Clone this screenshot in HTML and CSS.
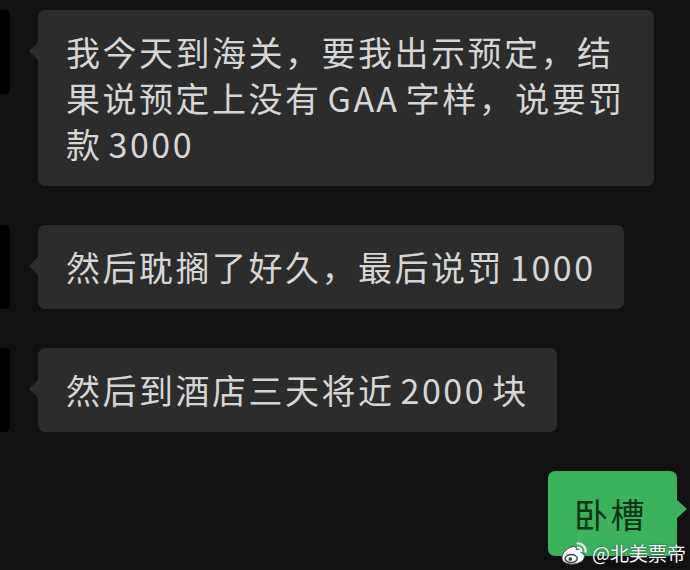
FILE: index.html
```html
<!DOCTYPE html>
<html lang="zh">

<head>
  <meta charset="UTF-8">
  <meta name="viewport" content="width=device-width, initial-scale=1.0">
  <title>聊天记录</title>
  <link rel="stylesheet" href="styles.css">
</head>

<body>
  <div class="chat">
    <div class="row">
      <div class="avatar"></div>
      <div class="bubble">我今天到海关，要我出示预定，结果说预定上没有 GAA 字样，说要罚款 3000</div>
    </div>
    <div class="row">
      <div class="avatar"></div>
      <div class="bubble">然后耽搁了好久，最后说罚 1000</div>
    </div>
    <div class="row">
      <div class="avatar"></div>
      <div class="bubble">然后到酒店三天将近 2000 块</div>
    </div>
    <div class="row row-me">
      <div class="bubble bubble-me">卧槽</div>
    </div>
  </div>

  <!-- 水印 -->
  <div class="watermark">
    <svg class="weibo" width="30" height="26" viewBox="0 0 32 28">
      <path d="M3 19c0-5 6-11 12-12 3-.5 4 1 3.5 3.5 2.5-1 5-.8 5 1.5 0 .8-.3 1.4-.3 1.4 2.8.8 4 2.2 4 4.3 0 4.5-6 8.3-13 8.3C8 26 3 23.5 3 19z" fill="#fff" stroke="#444" stroke-width="1"/>
      <ellipse cx="13" cy="20" rx="6.5" ry="4.3" fill="none" stroke="#444" stroke-width="1.6"/>
      <circle cx="12" cy="20.5" r="2" fill="#444"/>
      <path d="M20 3.5a8.5 8.5 0 0 1 8.5 9" fill="none" stroke="#fff" stroke-width="2.4" stroke-linecap="round"/>
      <path d="M20 8a4 4 0 0 1 4 4.2" fill="none" stroke="#fff" stroke-width="2.2" stroke-linecap="round"/>
    </svg>
    <span>@北美票帝</span>
  </div>
</body>

</html>
```

FILE: styles.css
```css
* {
  padding: 0;
  margin: 0;
  box-sizing: border-box;
}

body {
  background: #111111;
  font-family: "Noto Sans CJK SC", "Noto Sans", sans-serif;
  width: 690px;
  height: 570px;
  overflow: hidden;
  position: relative;
}

.chat {
  display: flex;
  flex-direction: column;
  gap: 39px;
  padding: 10px 13px 0 0;
}

.row {
  display: flex;
  align-items: flex-start;
  gap: 28px;
}

.row-me {
  justify-content: flex-end;
}

.avatar {
  width: 84px;
  height: 84px;
  margin-left: -74px;
  flex-shrink: 0;
  background: #000;
  border-radius: 5px;
}

.bubble {
  position: relative;
  max-width: 616px;
  padding: 19px 28px 19px 28px;
  background: #2c2c2c;
  border-radius: 7px;
  color: #d6d6d6;
  font-size: 34px;
  line-height: 46px;
  letter-spacing: 2.5px;
  word-spacing: -4px;
}

/* 气泡的小三角 */
.bubble::before {
  content: "";
  position: absolute;
  left: -9px;
  top: 32px;
  border-style: solid;
  border-width: 9px 9px 9px 0;
  border-color: transparent #2c2c2c transparent transparent;
}

.bubble-me {
  background: #3ab35c;
  color: #0a3313;
  padding: 20px 30px 19px 26px;
}

.bubble-me::before {
  left: auto;
  right: -10px;
  top: 29px;
  border-width: 9px 0 9px 10px;
  border-color: transparent transparent transparent #3ab35c;
}

.watermark {
  position: absolute;
  right: 4px;
  bottom: 4px;
  display: flex;
  align-items: center;
  gap: 3px;
  color: #fff;
  font-size: 19px;
  text-shadow: 0 0 2px rgba(0, 0, 0, 0.7);
}
```
